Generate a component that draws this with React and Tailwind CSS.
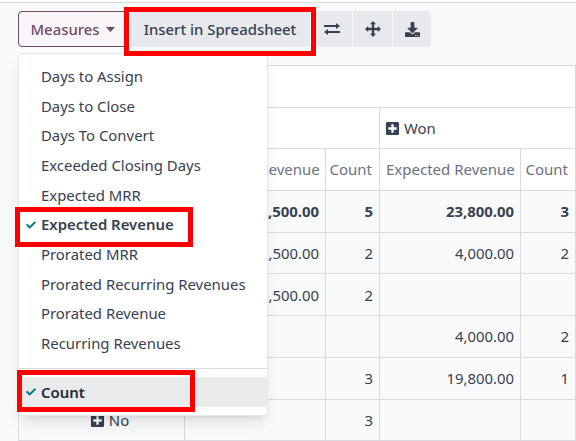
import React from 'react';
import { FaCheck, FaDownload, FaPlusSquare } from 'react-icons/fa';

const measures = [
  'Days to Assign',
  'Days to Close',
  'Days To Convert',
  'Exceeded Closing Days',
  'Expected MRR',
  'Expected Revenue',
  'Prorated MRR',
  'Prorated Recurring Revenues',
  'Prorated Revenue',
  'Recurring Revenues',
];

const rows = [
  { id: 1, cells: ['25,500.00', '5', '23,800.00', '3'], bold: true },
  { id: 2, cells: ['15,500.00', '2', '4,000.00', '2'] },
  { id: 3, cells: ['15,500.00', '2', '', ''] },
  { id: 4, cells: ['', '', '4,000.00', '2'] },
  { id: 5, cells: ['', '3', '19,800.00', '1'] },
  { id: 6, label: 'No', cells: ['', '3', '', ''] },
];

const cellBorder = 'border border-[#d8dadd]';

const App = () => {
  return (
    <div className="relative w-[576px] h-[441px] overflow-hidden bg-[#f9fafb] text-[14.9px] text-[#374151] font-['Noto_Sans',sans-serif]">
      <div className="h-[2px] bg-white" />
      <div className="border-t border-[#d8dadd] pt-2 pl-[18px]">
        <div className="flex items-stretch h-[36px]">
          <button className="w-[109px] flex items-center justify-center gap-[6px] rounded-l border border-[#714b67] bg-[#f9f5f8] text-[#714b67] font-medium">
            Measures
            <svg width="9" height="5" viewBox="0 0 9 5" fill="currentColor"><path d="M0 0h9L4.500 5z" /></svg>
          </button>
          <button className="ml-[3px] w-[180px] rounded-r bg-[#e7e9ed] font-medium">Insert in Spreadsheet</button>
          <button className="ml-[2px] w-[40px] flex items-center justify-center bg-[#e7e9ed]">
            <svg width="16" height="12" viewBox="0 0 16 12" fill="currentColor"><path d="M0 2h12V0l4 3-4 3V4H0zM16 8H4V6L0 9l4 3v-2h12z" /></svg>
          </button>
          <button className="ml-[1px] w-[39px] flex items-center justify-center bg-[#e7e9ed]">
            <svg width="16" height="16" viewBox="0 0 16 16" fill="currentColor"><path d="M8 0l3 3.200H9.200v3.600h3.600V5L16 8l-3.200 3V9.200H9.200v3.600H11L8 16l-3-3.200h1.800V9.200H3.200V11L0 8l3.200-3v1.800h3.600V3.200H5z" /></svg>
          </button>
          <button className="ml-[1px] w-[38px] flex items-center justify-center rounded-r bg-[#e7e9ed]"><FaDownload className="text-[15px]" /></button>
        </div>
      </div>

      <table className="ml-[18px] mt-[18px] w-[557px] table-fixed border-collapse">
        <colgroup>
          <col className="w-[166px]" />
          <col className="w-[141px]" />
          <col className="w-[54px]" />
          <col className="w-[141px]" />
          <col className="w-[55px]" />
        </colgroup>
        <tbody>
          <tr className="h-[41.7px] bg-white">
            <td rowSpan={3} className={cellBorder}></td>
            <td colSpan={4} className={cellBorder}></td>
          </tr>
          <tr className="h-[41.7px] bg-white">
            <td colSpan={2} className={cellBorder}></td>
            <td colSpan={2} className={`${cellBorder} px-[5px]`}>
              <FaPlusSquare className="inline mr-[4px] mb-[2px] text-[15px]" />Won
            </td>
          </tr>
          <tr className="h-[41.7px] bg-white text-[#6b7280] text-[15px]">
            <td className={`${cellBorder} px-[6px] pb-[1px] text-right whitespace-nowrap`}>Expected Revenue</td>
            <td className={`${cellBorder} pr-[7px] pb-[1px] text-right`}>Count</td>
            <td className={`${cellBorder} px-[6px] pb-[1px] text-right whitespace-nowrap`}>Expected Revenue</td>
            <td className={`${cellBorder} pr-[7px] pb-[1px] text-right`}>Count</td>
          </tr>
          {rows.map((row) => (
            <tr key={row.id} className={`h-[41.7px] ${row.bold ? 'font-bold' : ''}`}>
              <td className={`${cellBorder} pl-[16px] text-center`}>
                {row.label && <FaPlusSquare className="inline mr-[4px] mb-[2px] text-[15px]" />}
                {row.label}
              </td>
              {row.cells.map((c, i) => (
                <td key={i} className={`${cellBorder} px-[6px] text-right`}>{c}</td>
              ))}
            </tr>
          ))}
        </tbody>
      </table>

      <div className="absolute left-[18px] top-[53px] w-[250px] h-[363px] rounded bg-white border border-[#e5e7eb] shadow-lg pt-[7.5px]">
        {measures.map((m) => (
          <div key={m} className="relative h-[29.65px] pl-[22px] flex items-center whitespace-nowrap">
            {m === 'Expected Revenue' && <FaCheck className="absolute left-[7px] text-[10px] text-[#017e84]" />}
            <span className={m === 'Expected Revenue' ? 'font-semibold' : ''}>{m}</span>
          </div>
        ))}
        <div className="mt-[10px] border-t border-[#d8dadd]" />
        <div className="relative mt-[8px] h-[30px] pl-[22px] flex items-center bg-[#e9eaeb] font-semibold text-[#1f2937]">
          <FaCheck className="absolute left-[7px] text-[10px] text-[#017e84]" />
          Count
        </div>
      </div>

      <div className="absolute left-[124px] top-[7px] w-[192px] h-[49px] border-[5px] border-[#ff0000]" />
      <div className="absolute left-[15px] top-[207px] w-[178px] h-[40px] border-[5px] border-[#ff0000]" />
      <div className="absolute left-[17px] top-[370px] w-[178px] h-[42px] border-[5px] border-[#ff0000]" />
    </div>
  );
};

export default App;
